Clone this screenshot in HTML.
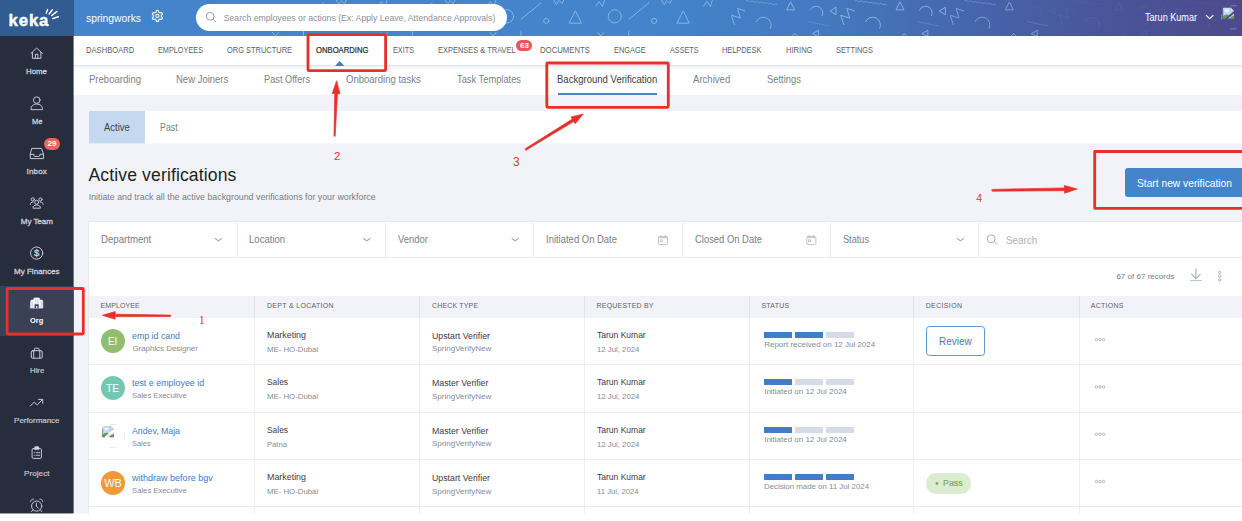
<!DOCTYPE html>
<html lang="en">
<head>
<meta charset="utf-8">
<title>Keka - Background Verification</title>
<style>
*{box-sizing:border-box;margin:0;padding:0}
html,body{width:1242px;height:521px;overflow:hidden;background:#fff;font-family:"Liberation Sans",sans-serif}
#app{position:absolute;left:0;top:0;width:1242px;height:514px;overflow:hidden;background:#f2f3f8}
#app div,#app svg,#app span{position:absolute}
.tx{white-space:nowrap}
#side{left:0;top:0;width:74px;height:514px;background:linear-gradient(90deg,#272d3d 0,#272d3d 73px,rgba(39,45,61,.6) 73px)}
#logo{left:0;top:0;width:74px;height:36px;background:linear-gradient(90deg,#305c91 0,#305c91 73px,rgba(48,92,145,.6) 73px)}
#orgbg{left:0;top:286px;width:74px;height:50px;background:linear-gradient(90deg,#3a4154 0,#3a4154 73px,rgba(58,65,84,.6) 73px)}
#hdr{left:73px;top:0;width:1169px;height:36px;background:linear-gradient(90deg,#4384ca 0%,#4384ca 50%,#4479c0 64%,#4667ae 76%,#49559a 88%,#4d4a8c 100%)}
#pill{left:196px;top:4px;width:311px;height:27px;border-radius:13.5px;background:#fff}
#nav1{left:73px;top:36px;width:1169px;height:30px;background:#fff;border-bottom:1px solid #e1e4ea}
#nav2{left:73px;top:66px;width:1169px;height:29px;background:#fff}
.badge{background:#e5565f;border-radius:6px}
#tabs{left:89px;top:111px;width:1153px;height:33px;background:linear-gradient(180deg,#fff 0,#fff 32px,rgba(255,255,255,.4) 32px)}
#tabA{left:89px;top:111px;width:56px;height:33px;background:linear-gradient(180deg,#c4d9ef 0,#c4d9ef 32px,rgba(196,217,239,.4) 32px)}
#btn{left:1125px;top:168px;width:125px;height:29px;background:#4384ca;border-radius:3px}
#filters{left:88px;top:221px;width:1154px;height:37px;background:#fff;border:1px solid #e8eaef;border-right:0}
#filters i{position:absolute;top:0;width:1px;height:35px;background:#ebedf2}
#rec{left:88px;top:258px;width:1154px;height:38px;background:#fff;border-left:1px solid #e8eaef}
#tbl{left:88px;top:296px;width:1154px;height:218px;background:#fff;border-left:1px solid #e8eaef}
#thead{left:0;top:0;width:1154px;height:22px;background:#f2f3f8}
#tbl i{position:absolute;top:0;width:1px;height:218px;background:rgba(170,178,200,.21)}
#tbl u{position:absolute;left:0;width:1154px;height:1px;background:#e9ebf0}
.av{width:24px;height:24px;border-radius:50%}
.bar{height:6px;width:28px;background:#d5dbe7}
.on{background:#3f7fc8}
</style>
</head>
<body>
<div id="app">

<div id="hdr"></div>
<svg style="left:74px;top:0" width="1168" height="36" viewBox="74 0 1168 36" fill="none" stroke="#93bde8" stroke-width="1" stroke-linecap="round" stroke-linejoin="round" opacity="0.85">
<g transform="translate(289.5 0)" opacity="1.00"><circle cx="0" cy="16.4" r="6.6"/><path d="M14 19.3L34 2.9"/><circle cx="39.3" cy="20.9" r="2.6"/><path d="M68.5 11.2l6 12h-12z"/><path d="M46 -1l3.5 5.5 2.5-4 3 3 2-4"/><path d="M89 6l3-4.5 3.5 5 2-6"/><path d="M-17 32.5l3 3.5 3-3.5M14 31v5"/></g>
<g transform="translate(398.3 0)" opacity="1.00"><circle cx="0" cy="16.4" r="6.6"/><path d="M14 19.3L34 2.9"/><circle cx="39.3" cy="20.9" r="2.6"/><path d="M68.5 11.2l6 12h-12z"/><path d="M46 -1l3.5 5.5 2.5-4 3 3 2-4"/><path d="M89 6l3-4.5 3.5 5 2-6"/><path d="M-17 32.5l3 3.5 3-3.5M14 31v5"/></g>
<g transform="translate(507.0 0)" opacity="1.00"><circle cx="0" cy="16.4" r="6.6"/><path d="M14 19.3L34 2.9"/><circle cx="39.3" cy="20.9" r="2.6"/><path d="M68.5 11.2l6 12h-12z"/><path d="M46 -1l3.5 5.5 2.5-4 3 3 2-4"/><path d="M89 6l3-4.5 3.5 5 2-6"/><path d="M-17 32.5l3 3.5 3-3.5M14 31v5"/></g>
<g transform="translate(614.8 0)" opacity="1.00"><circle cx="0" cy="16.4" r="6.6"/><path d="M14 19.3L34 2.9"/><circle cx="39.3" cy="20.9" r="2.6"/><path d="M68.5 11.2l6 12h-12z"/><path d="M46 -1l3.5 5.5 2.5-4 3 3 2-4"/><path d="M89 6l3-4.5 3.5 5 2-6"/><path d="M-17 32.5l3 3.5 3-3.5M14 31v5"/></g>
<g transform="translate(731.3 0)" opacity="1.00"><path d="M3.2 24.6L0 15.2l9 2.9L6.1 8.4l7.5 2.5"/><path d="M24.9 21.7A7.3 7.3 0 0 1 39.1 28.3"/><path d="M14.7 0.7q1.2-.9 2.4.3t2.4.3 2.4.3 2.4.3 2.4.3 2.4.3 2.4.3 2.4.3 2.4.3 2.4.3 2.4.3 2.4.3 2.4.3" stroke-width="0.6"/><path d="M59.4 2.2l3.9 7.7h-7.6z"/><g opacity="1.00"><path d="M78.8 10.1A6.5 6.5 0 0 1 90.9 15.6"/><path d="M99.1 10.9l5.6-3.7v7.3z"/></g><path d="M77.4 21.7l20 4.1" stroke-width="0.6" opacity="0.6"/><path d="M61.2 36l2.2-2.5 2.2 2.5M81.5 33.5l5.6-3.3v6z"/></g>
<g transform="translate(840.7 0)" opacity="1.00"><path d="M3.2 24.6L0 15.2l9 2.9L6.1 8.4l7.5 2.5"/><path d="M24.9 21.7A7.3 7.3 0 0 1 39.1 28.3"/><path d="M14.7 0.7q1.2-.9 2.4.3t2.4.3 2.4.3 2.4.3 2.4.3 2.4.3 2.4.3 2.4.3 2.4.3 2.4.3 2.4.3 2.4.3 2.4.3" stroke-width="0.6"/><path d="M59.4 2.2l3.9 7.7h-7.6z"/><g opacity="1.00"><path d="M78.8 10.1A6.5 6.5 0 0 1 90.9 15.6"/><path d="M99.1 10.9l5.6-3.7v7.3z"/></g><path d="M77.4 21.7l20 4.1" stroke-width="0.6" opacity="0.6"/><path d="M61.2 36l2.2-2.5 2.2 2.5M81.5 33.5l5.6-3.3v6z"/></g>
<g transform="translate(950.1 0)" opacity="0.80"><path d="M3.2 24.6L0 15.2l9 2.9L6.1 8.4l7.5 2.5"/><path d="M24.9 21.7A7.3 7.3 0 0 1 39.1 28.3"/><path d="M14.7 0.7q1.2-.9 2.4.3t2.4.3 2.4.3 2.4.3 2.4.3 2.4.3 2.4.3 2.4.3 2.4.3 2.4.3 2.4.3 2.4.3 2.4.3" stroke-width="0.6"/><path d="M59.4 2.2l3.9 7.7h-7.6z"/><g opacity="0.15"><path d="M78.8 10.1A6.5 6.5 0 0 1 90.9 15.6"/><path d="M99.1 10.9l5.6-3.7v7.3z"/></g><path d="M77.4 21.7l20 4.1" stroke-width="0.6" opacity="0.6"/><path d="M61.2 36l2.2-2.5 2.2 2.5M81.5 33.5l5.6-3.3v6z"/></g>
<g transform="translate(1059.5 0)" opacity="0.12"><path d="M3.2 24.6L0 15.2l9 2.9L6.1 8.4l7.5 2.5"/><path d="M24.9 21.7A7.3 7.3 0 0 1 39.1 28.3"/><path d="M14.7 0.7q1.2-.9 2.4.3t2.4.3 2.4.3 2.4.3 2.4.3 2.4.3 2.4.3 2.4.3 2.4.3 2.4.3 2.4.3 2.4.3 2.4.3" stroke-width="0.6"/><path d="M59.4 2.2l3.9 7.7h-7.6z"/><g opacity="1.00"><path d="M78.8 10.1A6.5 6.5 0 0 1 90.9 15.6"/><path d="M99.1 10.9l5.6-3.7v7.3z"/></g><path d="M77.4 21.7l20 4.1" stroke-width="0.6" opacity="0.6"/><path d="M61.2 36l2.2-2.5 2.2 2.5M81.5 33.5l5.6-3.3v6z"/></g>
<g transform="translate(1168.9 0)" opacity="0.10"><path d="M3.2 24.6L0 15.2l9 2.9L6.1 8.4l7.5 2.5"/><path d="M24.9 21.7A7.3 7.3 0 0 1 39.1 28.3"/><path d="M14.7 0.7q1.2-.9 2.4.3t2.4.3 2.4.3 2.4.3 2.4.3 2.4.3 2.4.3 2.4.3 2.4.3 2.4.3 2.4.3 2.4.3 2.4.3" stroke-width="0.6"/><path d="M59.4 2.2l3.9 7.7h-7.6z"/><g opacity="1.00"><path d="M78.8 10.1A6.5 6.5 0 0 1 90.9 15.6"/><path d="M99.1 10.9l5.6-3.7v7.3z"/></g><path d="M77.4 21.7l20 4.1" stroke-width="0.6" opacity="0.6"/><path d="M61.2 36l2.2-2.5 2.2 2.5M81.5 33.5l5.6-3.3v6z"/></g>
</svg>
<div id="pill"></div>
<svg style="left:204px;top:10px" width="14" height="14" viewBox="0 0 14 14" fill="none" stroke="#9a9fa8" stroke-width="1"><circle cx="6.2" cy="6.3" r="3.9"/><path d="M9.1 9.2l3 3"/></svg>
<!-- gear -->
<svg style="left:0;top:0" width="200" height="36" viewBox="0 0 200 36" fill="none" stroke="#fff" stroke-width="1.05" stroke-linejoin="round"><path d="M156.48 10.53 L158.32 10.53 L158.84 12.32 L159.82 12.89 L161.64 12.44 L162.56 14.03 L161.26 15.38 L161.26 16.52 L162.56 17.87 L161.64 19.46 L159.82 19.01 L158.84 19.58 L158.32 21.37 L156.48 21.37 L155.96 19.58 L154.98 19.01 L153.16 19.46 L152.24 17.87 L153.54 16.52 L153.54 15.38 L152.24 14.03 L153.16 12.44 L154.98 12.89 L155.96 12.32Z"/><circle cx="157.4" cy="15.95" r="1.6"/></svg>
<!-- user chevron + broken img -->
<svg style="left:1204px;top:13px" width="12" height="8" viewBox="0 0 12 8" fill="none" stroke="#fff" stroke-width="1.1"><path d="M2 2.2l3.7 3.5 3.7-3.5"/></svg>
<svg style="left:1218px;top:2px" width="24" height="32" viewBox="1218 2 24 32"><defs><g id="bi"><path d="M0.5 1.6q0-.9.9-.9h6.9l3.2 3.2v7.6H0.5z" fill="#c9d9f7"/><ellipse cx="4.4" cy="3.4" rx="2.1" ry="1" fill="#fff"/><path d="M0.5 11.5V9.6c1.6-2.3 4.3-2.9 6.4-1.4l-3.7 3.3z" fill="#5aa23c"/><path d="M7.2 11.5l2.6-2.5 1.7.5v2z" fill="#5aa23c"/><path d="M3.2 12.1L12.2 4.6" style="stroke:var(--tear,#fff)" stroke-width="2.1"/><path d="M8.3 0.7v3.2h3.2z" fill="#fff" stroke="#9a9da3" stroke-width="0.6" stroke-linejoin="round"/><path d="M0.5 3v8.5h2.4M7.4 11.5h4.1v-3" fill="none" stroke="#6f7277" stroke-width="0.8"/></g></defs><use href="#bi" x="1222.4" y="7.1" style="--tear:#4d4b8f"/><path d="M1230.8 5.8h6M1230 28.9h6.6M1221.6 14.2v5.8" stroke="#8a8fc6" stroke-width="0.9" fill="none" opacity=".85"/></svg>

<div id="nav1"></div>
<div id="nav2"></div>
<div style="left:74px;top:66px;width:1168px;height:4px;background:linear-gradient(180deg,rgba(205,210,224,.32),rgba(205,210,224,0))"></div>
<!-- active triangle -->
<svg style="left:333px;top:60px" width="14" height="6" viewBox="0 0 14 6"><path d="M2 6L6.7 1 11.4 6z" fill="#3f7fc8"/></svg>
<div class="badge" style="left:516.3px;top:40.4px;width:16.2px;height:11px"></div>
<!-- underline -->
<div style="left:558px;top:93px;width:99px;height:2px;background:#4a86cc"></div>

<div id="tabs"></div><div id="tabA"></div>
<div id="btn"></div>

<div id="filters">
 <i style="left:148px"></i><i style="left:296px"></i><i style="left:444px"></i><i style="left:593px"></i><i style="left:741px"></i><i style="left:889px"></i>
</div>
<div id="rec"></div>
<!-- filter chevrons -->
<svg style="left:0;top:0" width="1242" height="300" viewBox="0 0 1242 300" fill="none" stroke="#9ca1aa" stroke-width="0.9">
 <path d="M215 238.2l3.4 2.7 3.4-2.7M363.4 238.2l3.4 2.7 3.4-2.7M511.7 238.2l3.4 2.7 3.4-2.7M957 238.2l3.4 2.7 3.4-2.7" stroke="#a3aabb" stroke-width="1.1"/>
 <!-- calendars -->
 <g stroke="#b3b8c3" stroke-width="0.85"><rect x="658.4" y="236.4" width="9.1" height="8.2" rx="1.3"/><path d="M660.6 235.2v1.6M665.3 235.2v1.6"/><path d="M658.8 237.6h8.3" stroke="#c6cad3" stroke-width="1.2"/><rect x="660.2" y="239.9" width="2.1" height="1.9" stroke-width="0.7"/>
 <rect x="806.8" y="236.4" width="9.1" height="8.2" rx="1.3"/><path d="M809 235.2v1.6M813.7 235.2v1.6"/><path d="M807.2 237.6h8.3" stroke="#c6cad3" stroke-width="1.2"/><rect x="808.6" y="239.9" width="2.1" height="1.9" stroke-width="0.7"/></g>
 <!-- search icon -->
 <g stroke="#a7adbe" stroke-width="1"><circle cx="991.2" cy="238.8" r="3.9"/><path d="M994.1 241.7l3 3"/></g>
 <!-- download -->
 <path d="M1195.9 268.6v9.8M1191.3 274.2l4.6 4.5 4.6-4.5" stroke="#a9b0c3" stroke-width="1.15"/><path d="M1190.2 280.6h11.3" stroke="#b4bacb" stroke-width="0.95"/>
 <!-- v dots -->
 <g stroke="#9aa1b5" stroke-width="0.8"><circle cx="1219.65" cy="272.5" r="1.2"/><circle cx="1219.65" cy="276.2" r="1.2"/><circle cx="1219.65" cy="279.9" r="1.2"/></g>
</svg>

<div id="tbl">
 <div id="thead"></div>
 <i style="left:165px"></i><i style="left:330px"></i><i style="left:495px"></i><i style="left:660px"></i><i style="left:824px"></i><i style="left:990px"></i>
 <u style="top:68px"></u><u style="top:116px"></u><u style="top:163px"></u><u style="top:210px"></u>
</div>

<!-- avatars -->
<div class="av" style="left:100.9px;top:328.9px;background:#90be6e"></div>
<div class="av" style="left:100.9px;top:376.2px;background:#72c8b1"></div>
<div class="av" style="left:100.9px;top:470.8px;background:#f0993a"></div>
<!-- broken image row3 -->
<svg style="left:98px;top:420px" width="30" height="32" viewBox="98 420 30 32"><use href="#bi" x="102.1" y="425.4"/><path d="M109.5 424.4h6.6M109.5 447.7h6.2" stroke="#e3e5ea" stroke-width="0.9" fill="none"/><path d="M101.1 433v5.5M124.6 432.3v6.6" stroke="#eceef2" stroke-width="0.9" fill="none"/></svg>

<!-- status bars -->
<div class="bar on" style="left:764px;top:332px"></div><div class="bar on" style="left:795px;top:332px"></div><div class="bar" style="left:826px;top:332px"></div>
<div class="bar on" style="left:764px;top:379.3px"></div><div class="bar" style="left:795px;top:379.3px"></div><div class="bar" style="left:826px;top:379.3px"></div>
<div class="bar on" style="left:764px;top:426.6px"></div><div class="bar" style="left:795px;top:426.6px"></div><div class="bar" style="left:826px;top:426.6px"></div>
<div class="bar on" style="left:764px;top:473.9px"></div><div class="bar on" style="left:795px;top:473.9px"></div><div class="bar on" style="left:826px;top:473.9px"></div>

<!-- review btn / pass pill -->
<div style="left:926px;top:326px;width:58.5px;height:30px;border:1px solid #5f95d3;border-radius:3.5px;background:#fff"></div>
<div style="left:926px;top:473.4px;width:45px;height:20.2px;border-radius:10.1px;background:#dcecd0"></div>
<svg style="left:930px;top:478px" width="12" height="12" viewBox="0 0 12 12"><circle cx="7" cy="5.5" r="1.45" fill="#7bb257"/></svg>
<!-- action dots -->
<svg style="left:1090px;top:320px" width="20" height="180" viewBox="1090 320 20 180" fill="none" stroke="#9ba1b0" stroke-width="0.7">
 <g id="d"><circle cx="1096.5" cy="339.7" r="1.25"/><circle cx="1100" cy="339.7" r="1.25"/><circle cx="1103.5" cy="339.7" r="1.25"/></g>
 <use href="#d" y="47.3"/><use href="#d" y="94.6"/><use href="#d" y="141.9"/>
</svg>

<!-- SIDEBAR -->
<div id="side"></div>
<div id="logo"></div>
<div id="orgbg"></div>
<svg style="left:0;top:0" width="74" height="514" viewBox="0 0 74 514" fill="none" stroke="#ccd0da" stroke-width="0.95" stroke-linecap="round" stroke-linejoin="round">
<path d="M31 53.4L36.65 48.1l5.85 5.3M32.4 52.4v6h8.5v-6M35.4 58.4v-4.2h2.5v4.2"/>
<circle cx="36.75" cy="100.1" r="3.3"/><path d="M31 109.3c0-3.6 2.4-5.2 5.75-5.2s5.75 1.6 5.75 5.2z"/>
<path d="M32.1 148.4h9.4l2 5.9v4.3h-13.2v-4.3zM30.3 154.3h3.6v1.1a1 1 0 0 0 1 1h3.9a1 1 0 0 0 1-1v-1.1h3.7"/>
<circle cx="32.8" cy="199.4" r="1.6"/><circle cx="40.5" cy="199.4" r="1.6"/><circle cx="36.65" cy="202.2" r="2"/><path d="M32.9 207.8c0-1.9 1.6-2.8 3.75-2.8s3.75.9 3.75 2.8zM30.3 204.3c0-1.5 1-2.3 2.6-2.3M43 204.3c0-1.5-1-2.3-2.6-2.3"/>
<circle cx="36.65" cy="253.1" r="6.1"/>
<path d="M30.6 301.3a1.2 1.2 0 0 1 1.2-1.2h1.9v-1a1.2 1.2 0 0 1 1.2-1.2h3.6a1.2 1.2 0 0 1 1.2 1.2v1h1.9a1.2 1.2 0 0 1 1.2 1.2v6.8h-12.2z" fill="#f3f5f9" stroke="#f3f5f9" stroke-width="0.6"/>
<path d="M34.6 304.3h4.1v3.9h-4.1z" fill="#3a4154" stroke="none"/><path d="M36.1 306h1.2v2.2h-1.2z" fill="#f3f5f9" stroke="none"/>
<path d="M32.3 302v5.5M41.2 302v5.5M35.6 299.5v4M37.9 299.5v4" stroke="#aeb8cf" stroke-width="0.6"/>
<rect x="31.3" y="350.7" width="10.9" height="7.5" rx="1.2"/><path d="M33.7 350.7v7.5M39.8 350.7v7.5M34.5 350.7v-1.5a1 1 0 0 1 1-1h2.5a1 1 0 0 1 1 1v1.5"/>
<path d="M30.4 405.9l3.8-3.8 3 2.8 5.2-5.4M38.6 399.4h4.1v3.9"/>
<rect x="32.1" y="448.6" width="9.3" height="9.8" rx="1.1"/><path d="M34.6 449.4v-2a1 1 0 0 1 1-1h2.3a1 1 0 0 1 1 1v2z" fill="#d5d9e2" stroke-width="0.5"/><path d="M36.1 452.7h3.5M36.1 455.3h3.5M34.2 452.7h.3M34.2 455.3h.3" stroke-width="0.9"/>
<circle cx="36.65" cy="506.1" r="5.1"/><path d="M36.4 503.2v3.3l1.9 1.5M30.6 501.4a2.4 2.4 0 0 1 2.9-2.3M42.7 501.4a2.4 2.4 0 0 0-2.9-2.3M32.8 510l-1.2 1.6M40.5 510l1.2 1.6"/>
</svg>
<div class="badge" style="left:44px;top:137.9px;width:16.1px;height:12.2px;border-radius:6.1px;background:#e9665f"></div>
<svg style="left:0;top:0" width="74" height="36" viewBox="0 0 74 36" fill="none" stroke="#fff" stroke-width="1.45" stroke-linecap="round"><path d="M46.2 13.2L47.6 9.5M49.1 14L52.4 9.7M51.6 15.6L57 11.4M52.9 18.5L58.4 16.8"/></svg>

<span class="tx" style="left:8.50px;top:9.72px;font-size:16.8px;line-height:22px;color:#ffffff;letter-spacing:0.864px;font-weight:bold;-webkit-text-stroke:0.45px #ffffff">keka</span>
<span class="tx" style="left:85.60px;top:10.99px;font-size:11px;line-height:14px;color:#ffffff;letter-spacing:0.000px;transform:scaleX(0.9372);transform-origin:0 50%">springworks</span>
<span class="tx" style="left:223.70px;top:12.80px;font-size:8.7px;line-height:11px;color:#8b9099;letter-spacing:0.003px">Search employees or actions (Ex: Apply Leave, Attendance Approvals)</span>
<span class="tx" style="left:1145.20px;top:10.84px;font-size:10px;line-height:13px;color:#ffffff;letter-spacing:0.000px;transform:scaleX(0.9083);transform-origin:0 50%">Tarun Kumar</span>
<span class="tx" style="left:85.50px;top:44.62px;font-size:8.2px;line-height:11px;color:#5b5f67;letter-spacing:0.000px;transform:scaleX(0.9292);transform-origin:0 50%">DASHBOARD</span>
<span class="tx" style="left:157.80px;top:44.62px;font-size:8.2px;line-height:11px;color:#5b5f67;letter-spacing:0.000px;transform:scaleX(0.8908);transform-origin:0 50%">EMPLOYEES</span>
<span class="tx" style="left:227.30px;top:44.62px;font-size:8.2px;line-height:11px;color:#5b5f67;letter-spacing:0.000px;transform:scaleX(0.9101);transform-origin:0 50%">ORG STRUCTURE</span>
<span class="tx" style="left:393.10px;top:44.62px;font-size:8.2px;line-height:11px;color:#5b5f67;letter-spacing:0.000px;transform:scaleX(0.8871);transform-origin:0 50%">EXITS</span>
<span class="tx" style="left:438.30px;top:44.62px;font-size:8.2px;line-height:11px;color:#5b5f67;letter-spacing:0.000px;transform:scaleX(0.9114);transform-origin:0 50%">EXPENSES &amp; TRAVEL</span>
<span class="tx" style="left:540.10px;top:44.62px;font-size:8.2px;line-height:11px;color:#5b5f67;letter-spacing:0.000px;transform:scaleX(0.9476);transform-origin:0 50%">DOCUMENTS</span>
<span class="tx" style="left:613.50px;top:44.62px;font-size:8.2px;line-height:11px;color:#5b5f67;letter-spacing:0.000px;transform:scaleX(0.9074);transform-origin:0 50%">ENGAGE</span>
<span class="tx" style="left:669.60px;top:44.62px;font-size:8.2px;line-height:11px;color:#5b5f67;letter-spacing:0.000px;transform:scaleX(0.8851);transform-origin:0 50%">ASSETS</span>
<span class="tx" style="left:722.40px;top:44.62px;font-size:8.2px;line-height:11px;color:#5b5f67;letter-spacing:0.000px;transform:scaleX(0.9019);transform-origin:0 50%">HELPDESK</span>
<span class="tx" style="left:785.70px;top:44.62px;font-size:8.2px;line-height:11px;color:#5b5f67;letter-spacing:0.000px;transform:scaleX(0.9248);transform-origin:0 50%">HIRING</span>
<span class="tx" style="left:836.30px;top:44.62px;font-size:8.2px;line-height:11px;color:#5b5f67;letter-spacing:0.000px;transform:scaleX(0.9035);transform-origin:0 50%">SETTINGS</span>
<span class="tx" style="left:316.30px;top:44.62px;font-size:8.2px;line-height:11px;color:#2a2d33;letter-spacing:0.000px;transform:scaleX(0.9380);transform-origin:0 50%;-webkit-text-stroke:0.22px #2a2d33">ONBOARDING</span>
<span class="tx" style="left:519.90px;top:40.73px;font-size:8px;line-height:10px;color:#ffffff;letter-spacing:0.047px;font-weight:bold">63</span>
<span class="tx" style="left:88.50px;top:72.11px;font-size:10.6px;line-height:14px;color:#7b7f87;letter-spacing:0.000px;transform:scaleX(0.9009);transform-origin:0 50%">Preboarding</span>
<span class="tx" style="left:176.40px;top:72.11px;font-size:10.6px;line-height:14px;color:#7b7f87;letter-spacing:0.000px;transform:scaleX(0.8971);transform-origin:0 50%">New Joiners</span>
<span class="tx" style="left:264.30px;top:72.11px;font-size:10.6px;line-height:14px;color:#7b7f87;letter-spacing:0.000px;transform:scaleX(0.8713);transform-origin:0 50%">Past Offers</span>
<span class="tx" style="left:346.40px;top:72.11px;font-size:10.6px;line-height:14px;color:#7b7f87;letter-spacing:0.000px;transform:scaleX(0.8995);transform-origin:0 50%">Onboarding tasks</span>
<span class="tx" style="left:456.90px;top:72.11px;font-size:10.6px;line-height:14px;color:#7b7f87;letter-spacing:0.000px;transform:scaleX(0.8788);transform-origin:0 50%">Task Templates</span>
<span class="tx" style="left:693.40px;top:72.11px;font-size:10.6px;line-height:14px;color:#7b7f87;letter-spacing:0.000px;transform:scaleX(0.9025);transform-origin:0 50%">Archived</span>
<span class="tx" style="left:766.50px;top:72.11px;font-size:10.6px;line-height:14px;color:#7b7f87;letter-spacing:0.000px;transform:scaleX(0.8882);transform-origin:0 50%">Settings</span>
<span class="tx" style="left:557.40px;top:72.11px;font-size:10.6px;line-height:14px;color:#393c43;letter-spacing:0.000px;transform:scaleX(0.9002);transform-origin:0 50%">Background Verification</span>
<span class="tx" style="left:104.10px;top:119.81px;font-size:10.5px;line-height:14px;color:#3b3e45;letter-spacing:0.000px;transform:scaleX(0.8988);transform-origin:0 50%">Active</span>
<span class="tx" style="left:160.00px;top:119.81px;font-size:10.5px;line-height:14px;color:#7b7f87;letter-spacing:0.000px;transform:scaleX(0.8422);transform-origin:0 50%">Past</span>
<span class="tx" style="left:88.50px;top:164.18px;font-size:17.6px;line-height:23px;color:#1d1f23;letter-spacing:0.115px">Active verifications</span>
<span class="tx" style="left:88.70px;top:192.29px;font-size:8.8px;line-height:11px;color:#777b83;letter-spacing:0.012px">Initiate and track all the active background verifications for your workforce</span>
<span class="tx" style="left:1137.00px;top:176.11px;font-size:10.5px;line-height:14px;color:#ffffff;letter-spacing:0.000px;transform:scaleX(0.9747);transform-origin:0 50%">Start new verification</span>
<span class="tx" style="left:100.90px;top:232.31px;font-size:10.5px;line-height:14px;color:#7a7e86;letter-spacing:0.000px;transform:scaleX(0.9169);transform-origin:0 50%">Department</span>
<span class="tx" style="left:249.20px;top:232.31px;font-size:10.5px;line-height:14px;color:#7a7e86;letter-spacing:0.000px;transform:scaleX(0.9118);transform-origin:0 50%">Location</span>
<span class="tx" style="left:397.60px;top:232.31px;font-size:10.5px;line-height:14px;color:#7a7e86;letter-spacing:0.000px;transform:scaleX(0.9014);transform-origin:0 50%">Vendor</span>
<span class="tx" style="left:546.40px;top:232.31px;font-size:10.5px;line-height:14px;color:#7a7e86;letter-spacing:0.000px;transform:scaleX(0.9011);transform-origin:0 50%">Initiated On Date</span>
<span class="tx" style="left:694.70px;top:232.31px;font-size:10.5px;line-height:14px;color:#7a7e86;letter-spacing:0.000px;transform:scaleX(0.8967);transform-origin:0 50%">Closed On Date</span>
<span class="tx" style="left:843.00px;top:232.31px;font-size:10.5px;line-height:14px;color:#7a7e86;letter-spacing:0.000px;transform:scaleX(0.8730);transform-origin:0 50%">Status</span>
<span class="tx" style="left:1006.40px;top:233.11px;font-size:10.5px;line-height:14px;color:#adb1b9;letter-spacing:0.000px;transform:scaleX(0.9405);transform-origin:0 50%">Search</span>
<span class="tx" style="left:1116.40px;top:272.43px;font-size:8px;line-height:10px;color:#777b83;letter-spacing:0.012px">67 of 67 records</span>
<span class="tx" style="left:100.60px;top:301.17px;font-size:7px;line-height:9px;color:#5e6169;letter-spacing:0.086px">EMPLOYEE</span>
<span class="tx" style="left:267.00px;top:301.17px;font-size:7px;line-height:9px;color:#5e6169;letter-spacing:0.308px">DEPT &amp; LOCATION</span>
<span class="tx" style="left:432.00px;top:301.17px;font-size:7px;line-height:9px;color:#5e6169;letter-spacing:0.169px">CHECK TYPE</span>
<span class="tx" style="left:596.60px;top:301.17px;font-size:7px;line-height:9px;color:#5e6169;letter-spacing:0.178px">REQUESTED BY</span>
<span class="tx" style="left:761.40px;top:301.17px;font-size:7px;line-height:9px;color:#5e6169;letter-spacing:0.237px">STATUS</span>
<span class="tx" style="left:925.70px;top:301.17px;font-size:7px;line-height:9px;color:#5e6169;letter-spacing:0.357px">DECISION</span>
<span class="tx" style="left:1090.80px;top:301.17px;font-size:7px;line-height:9px;color:#5e6169;letter-spacing:0.268px">ACTIONS</span>
<span class="tx" style="left:132.40px;top:329.55px;font-size:9.6px;line-height:12px;color:#3c7cc7;letter-spacing:0.000px;transform:scaleX(0.9184);transform-origin:0 50%">emp id cand</span>
<span class="tx" style="left:132.40px;top:344.03px;font-size:8px;line-height:10px;color:#878b93;letter-spacing:-0.050px">Graphics Designer</span>
<span class="tx" style="left:267.00px;top:328.65px;font-size:9.6px;line-height:12px;color:#3a3d44;letter-spacing:0.000px;transform:scaleX(0.9258);transform-origin:0 50%">Marketing</span>
<span class="tx" style="left:267.00px;top:344.73px;font-size:8px;line-height:10px;color:#878b93;letter-spacing:0.000px;transform:scaleX(0.9761);transform-origin:0 50%">ME- HO-Dubai</span>
<span class="tx" style="left:432.00px;top:329.55px;font-size:9.6px;line-height:12px;color:#3a3d44;letter-spacing:0.000px;transform:scaleX(0.9141);transform-origin:0 50%">Upstart Verifier</span>
<span class="tx" style="left:432.00px;top:344.13px;font-size:8px;line-height:10px;color:#878b93;letter-spacing:0.004px">SpringVerifyNew</span>
<span class="tx" style="left:596.60px;top:328.65px;font-size:9.6px;line-height:12px;color:#3a3d44;letter-spacing:0.000px;transform:scaleX(0.8867);transform-origin:0 50%">Tarun Kumar</span>
<span class="tx" style="left:596.60px;top:344.73px;font-size:8px;line-height:10px;color:#878b93;letter-spacing:0.000px;transform:scaleX(0.9726);transform-origin:0 50%">12 Jul, 2024</span>
<span class="tx" style="left:764.20px;top:339.63px;font-size:8px;line-height:10px;color:#878b93;letter-spacing:-0.006px">Report received on 12 Jul 2024</span>
<span class="tx" style="left:132.40px;top:376.95px;font-size:9.6px;line-height:12px;color:#3c7cc7;letter-spacing:0.000px;transform:scaleX(0.9271);transform-origin:0 50%">test e employee id</span>
<span class="tx" style="left:132.40px;top:391.43px;font-size:8px;line-height:10px;color:#878b93;letter-spacing:0.000px;transform:scaleX(0.9610);transform-origin:0 50%">Sales Executive</span>
<span class="tx" style="left:267.00px;top:376.05px;font-size:9.6px;line-height:12px;color:#3a3d44;letter-spacing:0.000px;transform:scaleX(0.8750);transform-origin:0 50%">Sales</span>
<span class="tx" style="left:267.00px;top:392.13px;font-size:8px;line-height:10px;color:#878b93;letter-spacing:0.000px;transform:scaleX(0.9761);transform-origin:0 50%">ME- HO-Dubai</span>
<span class="tx" style="left:432.00px;top:376.95px;font-size:9.6px;line-height:12px;color:#3a3d44;letter-spacing:0.000px;transform:scaleX(0.9120);transform-origin:0 50%">Master Verifier</span>
<span class="tx" style="left:432.00px;top:391.53px;font-size:8px;line-height:10px;color:#878b93;letter-spacing:0.004px">SpringVerifyNew</span>
<span class="tx" style="left:596.60px;top:376.05px;font-size:9.6px;line-height:12px;color:#3a3d44;letter-spacing:0.000px;transform:scaleX(0.8867);transform-origin:0 50%">Tarun Kumar</span>
<span class="tx" style="left:596.60px;top:392.13px;font-size:8px;line-height:10px;color:#878b93;letter-spacing:0.000px;transform:scaleX(0.9726);transform-origin:0 50%">12 Jul, 2024</span>
<span class="tx" style="left:764.20px;top:387.03px;font-size:8px;line-height:10px;color:#878b93;letter-spacing:-0.006px">Initiated on 12 Jul 2024</span>
<span class="tx" style="left:132.40px;top:424.65px;font-size:9.6px;line-height:12px;color:#3c7cc7;letter-spacing:0.000px;transform:scaleX(0.9121);transform-origin:0 50%">Andev, Maja</span>
<span class="tx" style="left:132.40px;top:439.13px;font-size:8px;line-height:10px;color:#878b93;letter-spacing:0.000px;transform:scaleX(0.9293);transform-origin:0 50%">Sales</span>
<span class="tx" style="left:267.00px;top:423.75px;font-size:9.6px;line-height:12px;color:#3a3d44;letter-spacing:0.000px;transform:scaleX(0.8750);transform-origin:0 50%">Sales</span>
<span class="tx" style="left:267.00px;top:439.83px;font-size:8px;line-height:10px;color:#878b93;letter-spacing:0.000px;transform:scaleX(0.9567);transform-origin:0 50%">Patna</span>
<span class="tx" style="left:432.00px;top:424.65px;font-size:9.6px;line-height:12px;color:#3a3d44;letter-spacing:0.000px;transform:scaleX(0.9120);transform-origin:0 50%">Master Verifier</span>
<span class="tx" style="left:432.00px;top:439.23px;font-size:8px;line-height:10px;color:#878b93;letter-spacing:0.004px">SpringVerifyNew</span>
<span class="tx" style="left:596.60px;top:423.75px;font-size:9.6px;line-height:12px;color:#3a3d44;letter-spacing:0.000px;transform:scaleX(0.8867);transform-origin:0 50%">Tarun Kumar</span>
<span class="tx" style="left:596.60px;top:439.83px;font-size:8px;line-height:10px;color:#878b93;letter-spacing:0.000px;transform:scaleX(0.9726);transform-origin:0 50%">12 Jul, 2024</span>
<span class="tx" style="left:764.20px;top:434.73px;font-size:8px;line-height:10px;color:#878b93;letter-spacing:-0.006px">Initiated on 12 Jul 2024</span>
<span class="tx" style="left:132.40px;top:471.95px;font-size:9.6px;line-height:12px;color:#3c7cc7;letter-spacing:0.000px;transform:scaleX(0.9399);transform-origin:0 50%">withdraw before bgv</span>
<span class="tx" style="left:132.40px;top:486.43px;font-size:8px;line-height:10px;color:#878b93;letter-spacing:0.000px;transform:scaleX(0.9610);transform-origin:0 50%">Sales Executive</span>
<span class="tx" style="left:267.00px;top:471.05px;font-size:9.6px;line-height:12px;color:#3a3d44;letter-spacing:0.000px;transform:scaleX(0.9258);transform-origin:0 50%">Marketing</span>
<span class="tx" style="left:267.00px;top:487.13px;font-size:8px;line-height:10px;color:#878b93;letter-spacing:0.000px;transform:scaleX(0.9761);transform-origin:0 50%">ME- HO-Dubai</span>
<span class="tx" style="left:432.00px;top:471.95px;font-size:9.6px;line-height:12px;color:#3a3d44;letter-spacing:0.000px;transform:scaleX(0.9141);transform-origin:0 50%">Upstart Verifier</span>
<span class="tx" style="left:432.00px;top:486.53px;font-size:8px;line-height:10px;color:#878b93;letter-spacing:0.004px">SpringVerifyNew</span>
<span class="tx" style="left:596.60px;top:471.05px;font-size:9.6px;line-height:12px;color:#3a3d44;letter-spacing:0.000px;transform:scaleX(0.8867);transform-origin:0 50%">Tarun Kumar</span>
<span class="tx" style="left:596.60px;top:487.13px;font-size:8px;line-height:10px;color:#878b93;letter-spacing:0.000px;transform:scaleX(0.9674);transform-origin:0 50%">11 Jul, 2024</span>
<span class="tx" style="left:764.20px;top:482.03px;font-size:8px;line-height:10px;color:#878b93;letter-spacing:0.000px;transform:scaleX(0.9810);transform-origin:0 50%">Decision made on 11 Jul 2024</span>
<span class="tx" style="left:938.80px;top:334.31px;font-size:10.5px;line-height:14px;color:#3c7cc7;letter-spacing:0.000px;transform:scaleX(0.9466);transform-origin:0 50%">Review</span>
<span class="tx" style="left:942.50px;top:477.15px;font-size:9.6px;line-height:12px;color:#7bb257;letter-spacing:0.000px;transform:scaleX(0.9230);transform-origin:0 50%;-webkit-text-stroke:0.2px #7bb257">Pass</span>
<span class="tx" style="left:108.35px;top:334.19px;font-size:11px;line-height:14px;color:#ffffff;letter-spacing:0.000px;transform:scaleX(0.8841);transform-origin:0 50%">EI</span>
<span class="tx" style="left:106.35px;top:381.49px;font-size:11px;line-height:14px;color:#ffffff;letter-spacing:0.000px;transform:scaleX(0.9387);transform-origin:0 50%">TE</span>
<span class="tx" style="left:104.20px;top:476.09px;font-size:11px;line-height:14px;color:#ffffff;letter-spacing:-0.117px">WB</span>
<span class="tx" style="left:26.30px;top:66.93px;font-size:8px;line-height:10px;color:#cdd1da;letter-spacing:0.000px;transform:scaleX(0.9839);transform-origin:0 50%;-webkit-text-stroke:0.3px #cdd1da">Home</span>
<span class="tx" style="left:31.55px;top:116.93px;font-size:8px;line-height:10px;color:#cdd1da;letter-spacing:0.000px;transform:scaleX(0.9438);transform-origin:0 50%;-webkit-text-stroke:0.3px #cdd1da">Me</span>
<span class="tx" style="left:26.55px;top:167.03px;font-size:8px;line-height:10px;color:#cdd1da;letter-spacing:0.184px;-webkit-text-stroke:0.3px #cdd1da">Inbox</span>
<span class="tx" style="left:20.80px;top:216.63px;font-size:8px;line-height:10px;color:#cdd1da;letter-spacing:-0.045px;-webkit-text-stroke:0.3px #cdd1da">My Team</span>
<span class="tx" style="left:14.00px;top:267.13px;font-size:8px;line-height:10px;color:#cdd1da;letter-spacing:0.022px;-webkit-text-stroke:0.3px #cdd1da">My Finances</span>
<span class="tx" style="left:29.65px;top:366.23px;font-size:8px;line-height:10px;color:#c3c8d2;letter-spacing:0.000px;transform:scaleX(0.9747);transform-origin:0 50%;-webkit-text-stroke:0.2px #c3c8d2">Hire</span>
<span class="tx" style="left:14.10px;top:416.23px;font-size:8px;line-height:10px;color:#c3c8d2;letter-spacing:-0.036px;-webkit-text-stroke:0.2px #c3c8d2">Performance</span>
<span class="tx" style="left:23.95px;top:469.43px;font-size:8px;line-height:10px;color:#c3c8d2;letter-spacing:0.113px;-webkit-text-stroke:0.2px #c3c8d2">Project</span>
<span class="tx" style="left:30.00px;top:315.63px;font-size:8px;line-height:10px;color:#ffffff;letter-spacing:0.000px;transform:scaleX(0.9273);transform-origin:0 50%;font-weight:bold">Org</span>
<span class="tx" style="left:47.45px;top:139.03px;font-size:8px;line-height:10px;color:#ffffff;letter-spacing:0.147px;font-weight:bold">29</span>
<span class="tx" style="left:198.80px;top:312.04px;font-size:12px;line-height:16px;color:#e5342e;letter-spacing:0.000px;font-family:'Liberation Serif',serif">1</span>
<span class="tx" style="left:334.00px;top:149.37px;font-size:11.5px;line-height:15px;color:#e5342e;letter-spacing:0.000px">2</span>
<span class="tx" style="left:512.90px;top:153.94px;font-size:12px;line-height:16px;color:#e5342e;letter-spacing:0.000px">3</span>
<span class="tx" style="left:976.30px;top:191.31px;font-size:10.5px;line-height:14px;color:#e5342e;letter-spacing:0.000px">4</span>
<span class="tx" style="left:34.00px;top:246.86px;font-size:9.5px;line-height:12px;color:#d5d9e2;letter-spacing:0.000px;-webkit-text-stroke:0.25px #d5d9e2">$</span>

<div style="left:0;top:513px;width:1242px;height:1px;background:rgba(255,255,255,.55)"></div>
<!-- RED ANNOTATIONS -->
<svg style="left:0;top:0" width="1242" height="514" viewBox="0 0 1242 514" fill="none" stroke="#e7302a" stroke-width="2.8" stroke-linejoin="round" stroke-linecap="round">
 <rect x="7.1" y="288.5" width="76.2" height="45.5" rx="1"/>
 <rect x="308" y="34.6" width="77.6" height="36.1" rx="1"/>
 <rect x="546.8" y="63" width="121.5" height="44.3" rx="1"/>
 <path d="M1250 151.5H1094.7V208.3H1250"/>
 <!-- arrow1 -->
 <path d="M170.2 315.1 L115.2 314.2 L115.2 311.6 L102.4 315.3 L115.2 319.2 L115.2 316.6 L170.2 316.5Z" fill="#e7302a" stroke-width="0.7"/>
 <path d="M335.2 135.8 L337.5 93.8 L340.0 93.9 L336.6 80.8 L332.2 93.6 L334.7 93.7 L334.0 135.8Z" fill="#e7302a" stroke-width="0.7"/>
 <path d="M526.0 150.2 L573.8 121.5 L575.2 123.7 L583.3 114.0 L571.0 116.9 L572.3 119.1 L525.2 148.8Z" fill="#e7302a" stroke-width="0.7"/>
 <path d="M992.3 191.2 L1064.5 190.7 L1064.6 193.2 L1077.3 189.1 L1064.4 185.4 L1064.5 187.9 L992.3 189.4Z" fill="#e7302a" stroke-width="0.7"/>
</svg>

</div>
</body>
</html>
